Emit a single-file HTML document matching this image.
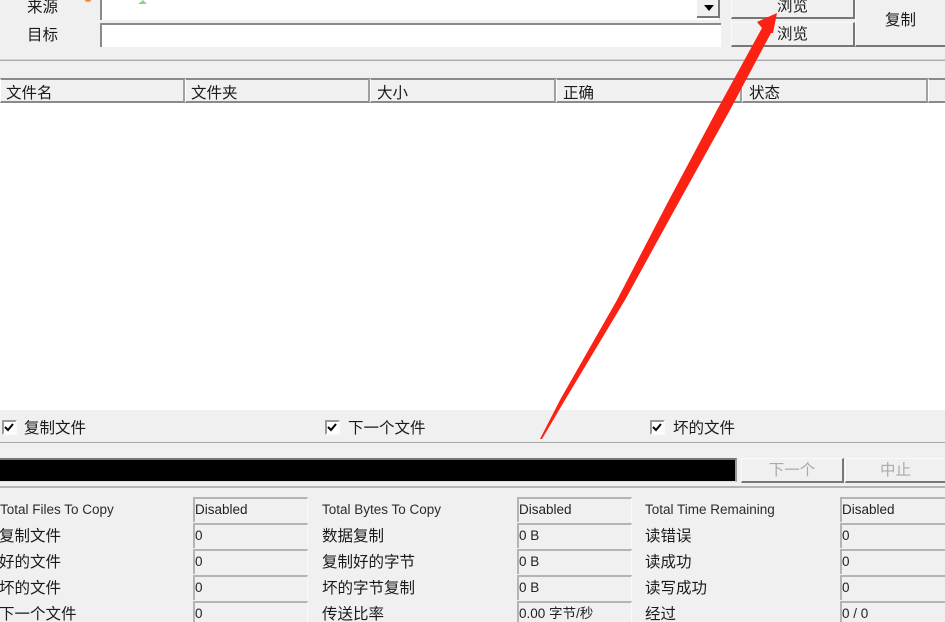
<!DOCTYPE html>
<html><head><meta charset="utf-8"><style>
html,body{margin:0;padding:0;width:945px;height:622px;overflow:hidden}
body{position:relative;background:#f0f0f0;font-family:"Liberation Sans","Noto Sans CJK SC",sans-serif;color:#1a1a1a}
div{position:absolute;box-sizing:border-box}
#root{left:0;top:0;width:945px;height:622px;overflow:hidden}
.t{font-size:15.5px;line-height:20px;white-space:nowrap}
.h{top:78px;height:25px;border-top:2px solid #8a8a8a;border-bottom:2px solid #8a8a8a;border-right:2px solid #a0a0a0;border-left:1px solid #fff;font-size:15.5px;line-height:27px;padding-left:5px;white-space:nowrap;overflow:hidden}
.v{height:25px;border-top:2px solid #b4b4b4;border-left:2px solid #b4b4b4;border-right:1px solid #fafafa;font-size:13.5px;line-height:21px;padding-left:0;white-space:nowrap;width:115px;color:#222}
.l{font-size:15.5px;line-height:20px;white-space:nowrap}
.e{font-size:13.5px;line-height:20px;white-space:nowrap;color:#2c2c2c}
.btn{border-right:2px solid #777;border-bottom:2px solid #777;border-top:1px solid #fafafa;border-left:1px solid #fafafa;background:#f0f0f0;text-align:center;font-size:15.5px}
.cb{width:15px;height:15px;border:2px solid #999;border-right-color:#fafafa;border-bottom-color:#fafafa;background:#fff}
</style></head><body><div id="root">
<div class="t" style="left:27px;top:-2px">来源</div>
<div class="t" style="left:27px;top:26px">目标</div>
<div style="left:100px;top:-2px;width:620px;height:22px;border-left:2px solid #8a8a8a;background:#fff;border-right:1px solid #ddd"></div>
<div style="left:697px;top:0;width:23px;height:18px;background:#f0f0f0;border-right:2px solid #777;border-bottom:2px solid #777"></div>
<div style="left:704px;top:5px;width:0;height:0;border-left:5px solid transparent;border-right:5px solid transparent;border-top:6px solid #000"></div>
<div style="left:100px;top:23px;width:621px;height:24px;border-top:2px solid #8a8a8a;border-left:2px solid #8a8a8a;background:#fff"></div>
<div class="btn" style="left:731px;top:-4px;width:124px;height:23px;line-height:20px">浏览</div>
<div class="btn" style="left:731px;top:22px;width:124px;height:25px;line-height:23px">浏览</div>
<div class="btn" style="left:855px;top:-4px;width:90px;height:51px;line-height:47px;border-right:0">复制</div>
<div style="left:0;top:60px;width:945px;height:1px;background:#aaa;box-shadow:0 -1px #d4d4d4"></div>

<div style="left:0;top:103px;width:945px;height:307px;background:#fff"></div>
<div class="h" style="left:0;width:185px">文件名</div>
<div class="h" style="left:185px;width:185px">文件夹</div>
<div class="h" style="left:370px;width:186px;padding-left:6px">大小</div>
<div class="h" style="left:556px;width:186px;padding-left:6px">正确</div>
<div class="h" style="left:742px;width:186px;padding-left:6px">状态</div>
<div class="h" style="left:928px;width:17px;border-right:0"></div>

<div class="cb" style="left:2px;top:420px"></div>
<div class="cb" style="left:325px;top:420px"></div>
<div class="cb" style="left:650px;top:420px"></div>
<svg style="position:absolute;left:0;top:0" width="945" height="622">
<path d="M5 427l3 3 5-6M328 427l3 3 5-6M653 427l3 3 5-6" fill="none" stroke="#000" stroke-width="2"/>
</svg>
<div class="t" style="left:24px;top:419px">复制文件</div>
<div class="t" style="left:348px;top:419px">下一个文件</div>
<div class="t" style="left:673px;top:419px">坏的文件</div>
<div style="left:0;top:442px;width:945px;height:1px;background:#a8a8a8"></div>

<div style="left:0;top:458px;width:737px;height:24px;background:#000;border-top:2px solid #777;border-right:2px solid #999;border-bottom:1px solid #ddd"></div>
<div class="btn" style="left:741px;top:458px;width:103px;height:25px;line-height:24px;color:#aaa">下一个</div>
<div class="btn" style="left:845px;top:458px;width:100px;height:25px;line-height:24px;color:#aaa;border-right:0">中止</div>
<div style="left:0;top:486px;width:945px;height:2px;background:#b4b4b4"></div>

<div class="e" style="left:0;top:500px">Total Files To Copy</div>
<div class="v" style="left:193px;top:497px">Disabled</div>
<div class="l" style="left:-1px;top:527px">复制文件</div><div class="v" style="left:193px;top:523px">0</div>
<div class="l" style="left:-1px;top:553px">好的文件</div><div class="v" style="left:193px;top:549px">0</div>
<div class="l" style="left:-1px;top:579px">坏的文件</div><div class="v" style="left:193px;top:575px">0</div>
<div class="l" style="left:-1px;top:605px">下一个文件</div><div class="v" style="left:193px;top:601px">0</div>

<div class="e" style="left:322px;top:500px">Total Bytes To Copy</div>
<div class="v" style="left:517px;top:497px">Disabled</div>
<div class="l" style="left:322px;top:527px">数据复制</div><div class="v" style="left:517px;top:523px">0 B</div>
<div class="l" style="left:322px;top:553px">复制好的字节</div><div class="v" style="left:517px;top:549px">0 B</div>
<div class="l" style="left:322px;top:579px">坏的字节复制</div><div class="v" style="left:517px;top:575px">0 B</div>
<div class="l" style="left:322px;top:605px">传送比率</div><div class="v" style="left:517px;top:601px">0.00 字节/秒</div>

<div class="e" style="left:645px;top:500px">Total Time Remaining</div>
<div class="v" style="left:840px;top:497px;width:105px;border-right:0">Disabled</div>
<div class="l" style="left:645px;top:527px">读错误</div><div class="v" style="left:840px;top:523px;width:105px;border-right:0">0</div>
<div class="l" style="left:645px;top:553px">读成功</div><div class="v" style="left:840px;top:549px;width:105px;border-right:0">0</div>
<div class="l" style="left:645px;top:579px">读写成功</div><div class="v" style="left:840px;top:575px;width:105px;border-right:0">0</div>
<div class="l" style="left:645px;top:605px">经过</div><div class="v" style="left:840px;top:601px;width:105px;border-right:0">0 / 0</div>

<svg style="position:absolute;left:0;top:0" width="945" height="622">
<polygon points="777,13 773,33 771,33 730,110 680,200 625,300 565,400 542,439 540,439 560,400 617,300 669,200 717,110 762,28 757,22" fill="#fb2113"/>
<polygon points="138,4 147,4 143,0" fill="#8fd08f"/>
</svg>
<div style="left:84px;top:-3px;width:8px;height:5px;background:#f58a3c;border-radius:0 0 4px 4px"></div>
</div></body></html>
